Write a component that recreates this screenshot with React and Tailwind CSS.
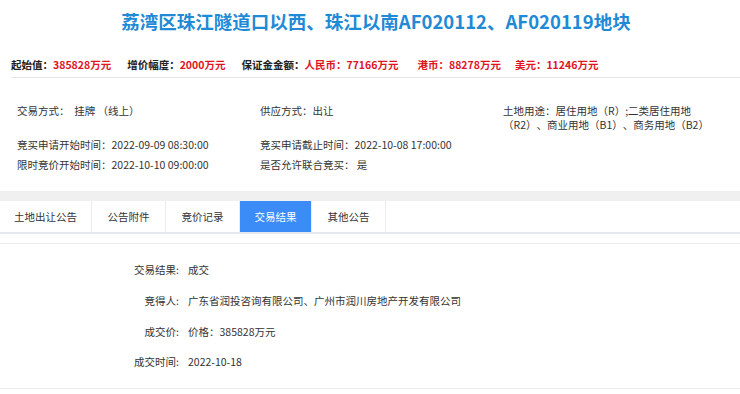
export default function App() {
  const tabs = [
    { t: "土地出让公告", w: "w-[92px]" },
    { t: "公告附件", w: "w-[74px]" },
    { t: "竞价记录", w: "w-[74px]" },
    { t: "交易结果", w: "w-[72px]", active: true },
    { t: "其他公告", w: "w-[74px]" },
  ];
  const results = [
    ["交易结果:", "成交"],
    ["竞得人:", "广东省润投咨询有限公司、广州市润川房地产开发有限公司"],
    ["成交价:", "价格：385828万元"],
    ["成交时间:", "2022-10-18"],
  ];
  return (
    <div className="w-[740px] h-[394px] overflow-hidden bg-white font-['Noto_Sans_CJK_SC','Microsoft_YaHei',sans-serif] text-[#333] [text-spacing-trim:space-all]">
      {/* title */}
      <div className="h-[41px] flex items-center justify-center pl-[12px] pt-[1px]">
        <h1 className="text-[18.5px] font-bold text-[#1f8ad6] leading-none">
          荔湾区珠江隧道口以西、珠江以南AF020112、AF020119地块
        </h1>
      </div>
      {/* price row */}
      <div className="ml-[11px] h-[37px] border-b border-[#e6e6e6] flex items-center pt-[12px] text-[10.5px] font-bold leading-none">
        <span className="text-[#222]">起始值：</span>
        <span className="text-[#e0141e]">385828万元</span>
        <span className="text-[#222] ml-[16px]">增价幅度：</span>
        <span className="text-[#e0141e]">2000万元</span>
        <span className="text-[#222] ml-[16px]">保证金金额：</span>
        <span className="text-[#e0141e]">人民币：77166万元</span>
        <span className="text-[#e0141e] ml-[19px]">港币：88278万元</span>
        <span className="text-[#e0141e] ml-[14px]">美元：11246万元</span>
      </div>
      {/* info block */}
      <div className="pl-[17px] pt-[26px] h-[113px] text-[10.5px]">
        <div className="flex h-[28px] leading-[14px]">
          <div className="w-[243px]">交易方式：&nbsp; 挂牌 （线上）</div>
          <div className="w-[243px]">供应方式：出让</div>
          <div className="w-[220px] whitespace-nowrap">
            <div>土地用途：居住用地（R）;二类居住用地</div>
            <div>（R2）、商业用地（B1）、商务用地（B2）</div>
          </div>
        </div>
        <div className="flex mt-[3px] leading-[20px]">
          <div className="w-[243px]">竞买申请开始时间：2022-09-09 08:30:00</div>
          <div className="w-[243px]">竞买申请截止时间：2022-10-08 17:00:00</div>
        </div>
        <div className="flex leading-[20px]">
          <div className="w-[243px]">限时竞价开始时间：2022-10-10 09:00:00</div>
          <div className="w-[243px]">是否允许联合竞买： 是</div>
        </div>
      </div>
      {/* gray band */}
      <div className="h-[10px] bg-[#f0f0f0]" />
      {/* tabs */}
      <div className="flex h-[33px] border-b-[2px] border-[#e8e8f0]">
        {tabs.map((tab) => (
          <div
            key={tab.t}
            className={`${tab.w} flex items-center justify-center text-[10.5px] border-r border-[#ececec] ${
              tab.active ? "bg-[#3b8cf6] text-white border-[#3b8cf6]" : "text-[#333]"
            }`}
          >
            {tab.t}
          </div>
        ))}
      </div>
      {/* result section */}
      <div className="mt-[9px] border-t border-[#ececec] h-[146px] border-b pt-[11px]">
        {results.map(([k, v]) => (
          <div key={k} className="flex h-[30.6px] items-center text-[10.5px]">
            <div className="w-[180px] text-right pr-[1px]">{k}</div>
            <div className="ml-[8px]">{v}</div>
          </div>
        ))}
      </div>
    </div>
  );
}
